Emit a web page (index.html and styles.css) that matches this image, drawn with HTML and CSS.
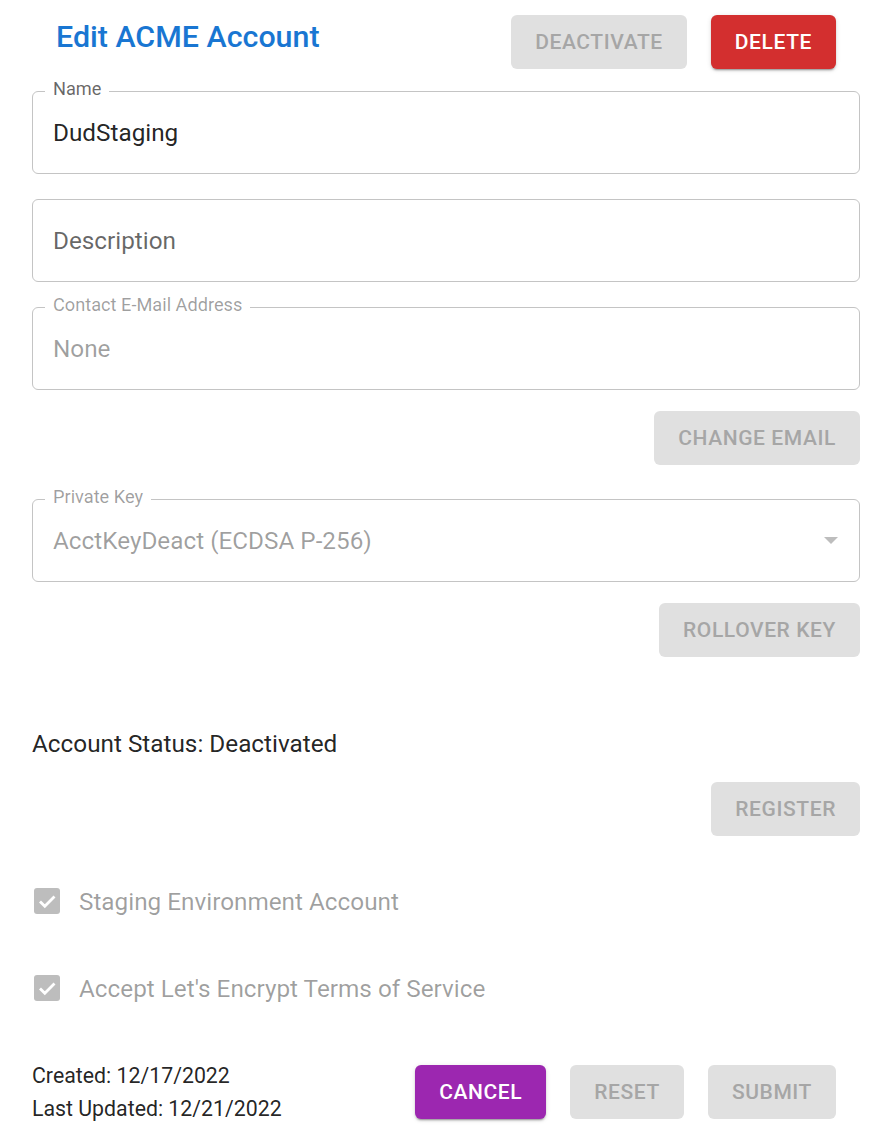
FILE: index.html
```html
<!DOCTYPE html>
<html>
<head>
<meta charset="utf-8">
<link rel="stylesheet" href="styles.css">
</head>
<body>
<div class="page">
  <div class="header">
    <h1 class="title">Edit ACME Account</h1>
    <div class="header-actions">
      <button class="btn btn-disabled">Deactivate</button>
      <button class="btn btn-red">Delete</button>
    </div>
  </div>

  <div class="field field-name">
    <span class="field-label">Name</span>
    <span class="field-value">DudStaging</span>
  </div>

  <div class="field field-desc">
    <span class="field-placeholder">Description</span>
  </div>

  <div class="field field-email field-disabled">
    <span class="field-label">Contact E-Mail Address</span>
    <span class="field-value">None</span>
  </div>

  <div class="row-right row-email">
    <button class="btn btn-disabled">Change Email</button>
  </div>

  <div class="field field-key field-disabled">
    <span class="field-label">Private Key</span>
    <span class="field-value">AcctKeyDeact (ECDSA P-256)</span>
    <svg class="select-arrow" width="14" height="7" viewBox="0 0 14 7"><path d="M0 0 L14 0 L7 7 Z" fill="#bdbdbd"/></svg>
  </div>

  <div class="row-right row-rollover">
    <button class="btn btn-disabled">Rollover Key</button>
  </div>

  <p class="status">Account Status: Deactivated</p>

  <div class="row-right row-register">
    <button class="btn btn-disabled">Register</button>
  </div>

  <div class="check-row check-first">
    <span class="checkbox"><svg width="26" height="26" viewBox="0 0 26 26"><rect width="26" height="26" rx="3" fill="#bdbdbd"/><path d="M6 13.5 L10.8 18.3 L20.5 8.6" stroke="#fff" stroke-width="2.8" fill="none"/></svg></span>
    <span class="check-label">Staging Environment Account</span>
  </div>

  <div class="check-row check-second">
    <span class="checkbox"><svg width="26" height="26" viewBox="0 0 26 26"><rect width="26" height="26" rx="3" fill="#bdbdbd"/><path d="M6 13.5 L10.8 18.3 L20.5 8.6" stroke="#fff" stroke-width="2.8" fill="none"/></svg></span>
    <span class="check-label">Accept Let's Encrypt Terms of Service</span>
  </div>

  <div class="footer">
    <div class="dates">
      <div>Created: 12/17/2022</div>
      <div>Last Updated: 12/21/2022</div>
    </div>
    <div class="footer-actions">
      <button class="btn btn-purple">Cancel</button>
      <button class="btn btn-disabled">Reset</button>
      <button class="btn btn-disabled">Submit</button>
    </div>
  </div>
</div>
</body>
</html>
```

FILE: styles.css
```css
* { box-sizing: border-box; }
html, body { margin: 0; padding: 0; background: #fff; }
body {
  font-family: Roboto, "Liberation Sans", Arial, sans-serif;
  color: rgba(0,0,0,0.87);
}
.page {
  padding: 15px 26px 0 32px;
  display: flex;
  flex-direction: column;
}
.header {
  display: flex;
  align-items: flex-start;
  justify-content: space-between;
  padding: 0 24px;
}
.title {
  margin: 4px 0 0 0;
  font-size: 30.4px;
  line-height: 36px;
  font-weight: 500;
  color: #1976d2;
}
.header-actions, .footer-actions {
  display: flex;
  gap: 24px;
}
.btn {
  height: 54px;
  padding: 0 24px;
  border: none;
  border-radius: 6px;
  font-family: Roboto, "Liberation Sans", Arial, sans-serif;
  font-size: 21px;
  font-weight: 500;
  letter-spacing: 0.02857em;
  text-transform: uppercase;
  cursor: default;
}
.btn-disabled {
  background: #e0e0e0;
  color: #a6a6a6;
}
.btn-red {
  background: #d32f2f;
  color: #fff;
  box-shadow: 0 3px 1px -2px rgba(0,0,0,0.2), 0 2px 2px 0 rgba(0,0,0,0.14), 0 1px 5px 0 rgba(0,0,0,0.12);
}
.btn-purple {
  background: #9c27b0;
  color: #fff;
  box-shadow: 0 3px 1px -2px rgba(0,0,0,0.2), 0 2px 2px 0 rgba(0,0,0,0.14), 0 1px 5px 0 rgba(0,0,0,0.12);
}
.field {
  position: relative;
  height: 83px;
  border: 1px solid #c4c4c4;
  border-radius: 6px;
  display: flex;
  align-items: center;
  padding: 0 20px;
  font-size: 24.3px;
}
.field-name { margin-top: 22px; }
.field-desc { margin-top: 25px; }
.field-email { margin-top: 25px; }
.field-key { margin-top: 34px; }
.field-label {
  position: absolute;
  top: -13px;
  left: 12px;
  padding: 0 8px;
  background: #fff;
  font-size: 18.2px;
  line-height: 20px;
  color: rgba(0,0,0,0.6);
}
.field-value { color: rgba(0,0,0,0.87); }
.field-placeholder { color: rgba(0,0,0,0.6); }
.field-disabled .field-label,
.field-disabled .field-value { color: rgba(0,0,0,0.38); }
.select-arrow {
  margin-left: auto;
  margin-right: 1px;
}
.row-right {
  display: flex;
  justify-content: flex-end;
}
.row-email { margin-top: 21px; }
.row-rollover { margin-top: 21px; }
.status {
  margin: 70px 0 0 0;
  font-size: 24.3px;
  line-height: 33px;
}
.row-register { margin-top: 22px; }
.check-row {
  display: flex;
  align-items: center;
  height: 54px;
  padding-left: 2px;
}
.check-first { margin-top: 38px; }
.check-second { margin-top: 33px; }
.checkbox { display: flex; width: 26px; height: 26px; }
.check-label {
  margin-left: 19px;
  font-size: 24.3px;
  color: rgba(0,0,0,0.38);
}
.footer {
  margin-top: 44px;
  display: flex;
  align-items: center;
  justify-content: space-between;
  padding-right: 24px;
}
.dates {
  font-size: 21.3px;
  line-height: 33px;
}
```
